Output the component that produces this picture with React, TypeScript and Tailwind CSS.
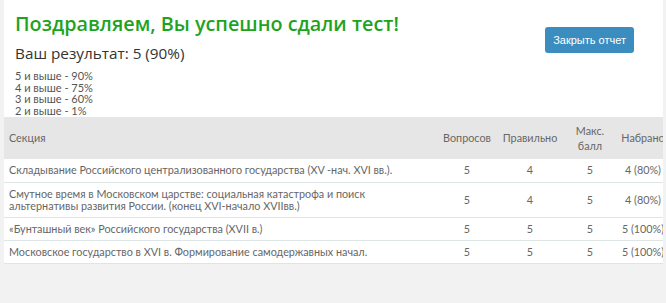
const thresholds = [
  "5 и выше - 90%",
  "4 и выше - 75%",
  "3 и выше - 60%",
  "2 и выше - 1%",
];

type Row = {
  section: string;
  questions: number;
  correct: number;
  max: number;
  scored: string;
  tall?: boolean;
};

const rows: Row[] = [
  {
    section: "Складывание Российского централизованного государства (XV -нач. XVI вв.).",
    questions: 5,
    correct: 4,
    max: 5,
    scored: "4 (80%)",
  },
  {
    section:
      "Смутное время в Московском царстве: социальная катастрофа и поиск альтернативы развития России. (конец XVI-начало XVIIвв.)",
    questions: 5,
    correct: 4,
    max: 5,
    scored: "4 (80%)",
    tall: true,
  },
  {
    section: "«Бунташный век» Российского государства (XVII в.)",
    questions: 5,
    correct: 5,
    max: 5,
    scored: "5 (100%)",
  },
  {
    section: "Московское государство в XVI в. Формирование самодержавных начал.",
    questions: 5,
    correct: 5,
    max: 5,
    scored: "5 (100%)",
  },
];

export default function App() {
  return (
    <div className="w-[666px] h-[303px] bg-[#f2f2f2] pl-[4px] pr-[3px] overflow-hidden">
      <div className="bg-white overflow-hidden font-['Lato',sans-serif]">
        <div className="flex justify-between pl-[11px] pr-[29px] pt-[10px]">
          <div>
            <h1 className="font-['Open_Sans',sans-serif] font-semibold text-[19.8px] leading-[28px] text-[#1fa31f]">
              Поздравляем, Вы успешно сдали тест!
            </h1>
            <div className="mt-[5px] font-['Open_Sans',sans-serif] text-[15.3px] leading-[21px] text-[#333]">
              Ваш результат: 5 (90%)
            </div>
            <div className="mt-[6px] text-[11px] leading-[11.5px] text-[#555]">
              {thresholds.map((t) => (
                <div key={t}>{t}</div>
              ))}
            </div>
          </div>
          <div className="pt-[16px]">
            <button className="bg-[#3b8dbf] text-white rounded-[3px] h-[26px] px-[8px] text-[11px] font-['Liberation_Sans',sans-serif]">
              Закрыть отчет
            </button>
          </div>
        </div>

        <table className="w-[665px] mt-[1px] border-collapse text-[10.8px] leading-[12px] text-[#666] table-fixed">
          <colgroup>
            <col className="w-[433px]" />
            <col className="w-[60px]" />
            <col className="w-[66px]" />
            <col className="w-[54px]" />
            <col className="w-[52px]" />
          </colgroup>
          <thead>
            <tr className="bg-[#e6e6e6] h-[42px]">
              <th className="text-left font-normal pl-[5px]">Секция</th>
              <th className="font-normal">Вопросов</th>
              <th className="font-normal">Правильно</th>
              <th className="font-normal leading-[15px]">
                Макс.
                <br />
                балл
              </th>
              <th className="font-normal">Набрано</th>
            </tr>
          </thead>
          <tbody>
            {rows.map((r) => (
              <tr
                key={r.section}
                className={`border-b border-[#dde6e6] ${r.tall ? "h-[35px]" : "h-[23px]"}`}
              >
                <td className="pl-[5px] pr-[30px]">{r.section}</td>
                <td className="text-center">{r.questions}</td>
                <td className="text-center">{r.correct}</td>
                <td className="text-center">{r.max}</td>
                <td className="text-center">{r.scored}</td>
              </tr>
            ))}
          </tbody>
        </table>
      </div>
    </div>
  );
}
